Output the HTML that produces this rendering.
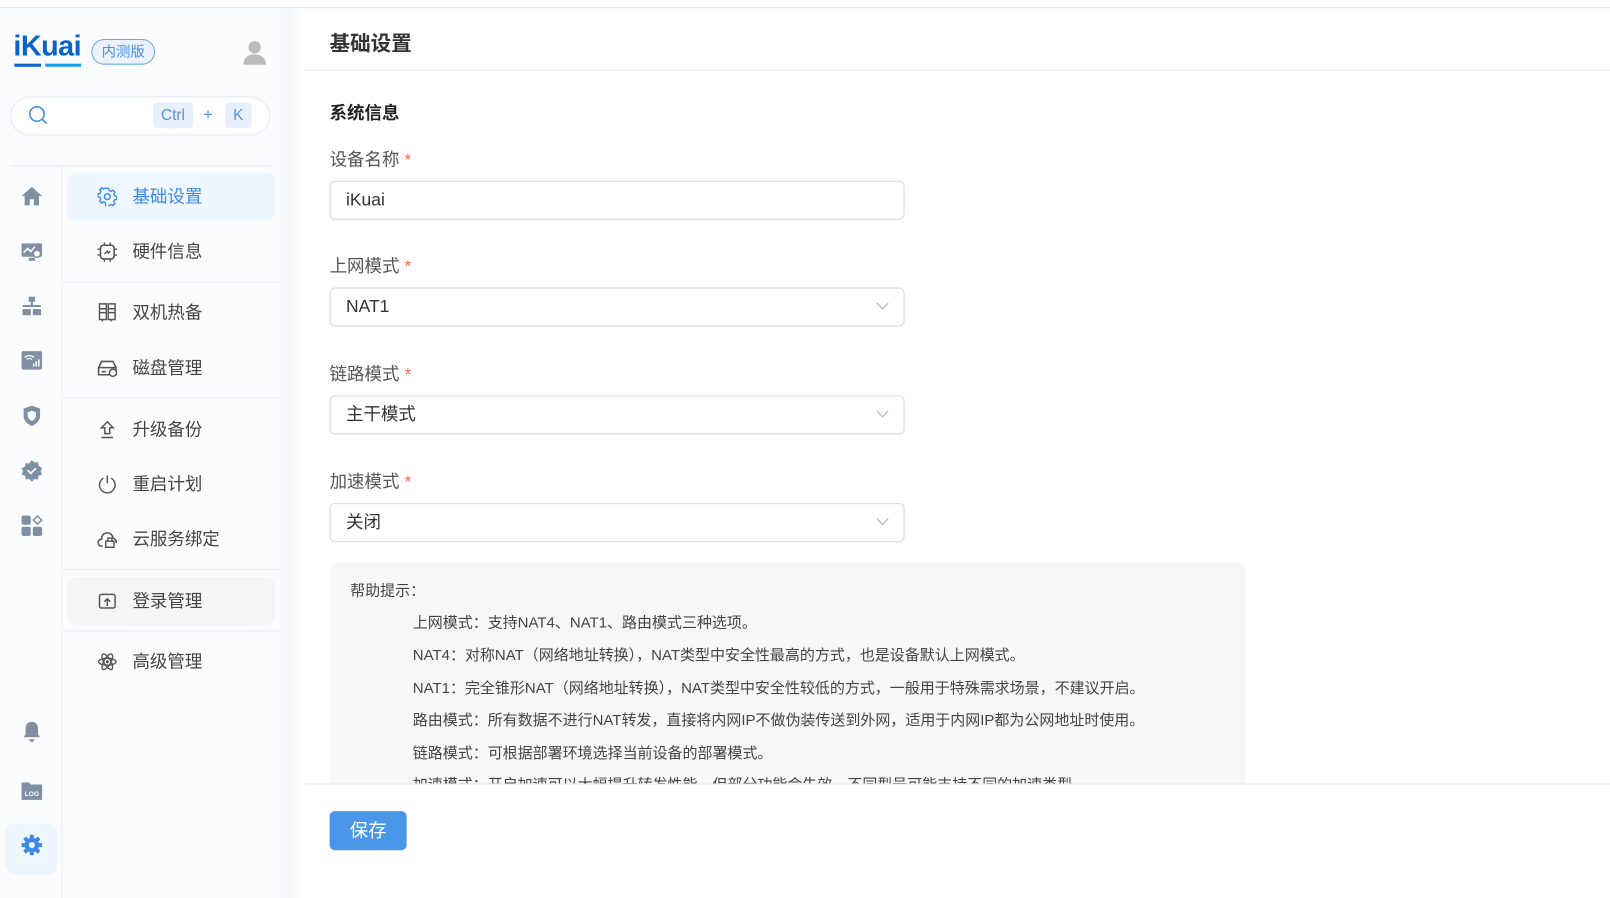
<!DOCTYPE html>
<html><head><meta charset="utf-8">
<style>
*{margin:0;padding:0;box-sizing:border-box}
html,body{width:1610px;height:875px;overflow:hidden;background:#fff}
#w{position:absolute;left:0;top:0;width:1568px;height:852px;transform:scale(1.0268);transform-origin:0 0;font-family:"Liberation Sans","Noto Sans CJK SC",sans-serif;color:#333}
.topline{position:absolute;left:0;top:7px;width:1568px;height:1px;background:#e4e4e4}
.side{position:absolute;left:0;top:8px;width:273px;height:867px;background:#fbfcfe}
.shadow{position:absolute;left:273px;top:8px;width:24px;height:867px;background:linear-gradient(90deg,#f1f5fa,#fff)}
.rail{position:absolute;left:60px;top:162px;width:1px;height:713px;background:#eceef2}
.hsep{position:absolute;left:10px;top:161px;width:253px;height:1px;background:#e9ecf0}
.logo{position:absolute;left:13px;top:29px;font-weight:bold;font-size:28px;color:#0a63c9;letter-spacing:-0.5px}
.logo-ul{position:absolute;top:62px;height:3px}
.badge{position:absolute;left:89px;top:38px;width:62px;height:25px;border:1px solid #6aa4e8;border-radius:13px;background:#eaf3fd;color:#4a8ee0;font-size:14px;text-align:center;line-height:23px}
.search{position:absolute;left:10px;top:94px;width:253px;height:38px;border:1px solid #e3ecf7;border-radius:19px;background:#fff}
.kbd{position:absolute;top:100px;height:25px;background:#e7f0fc;border-radius:4px;color:#5a93dc;font-size:15px;line-height:25px;text-align:center}
.ri{position:absolute;left:20px;width:22px;height:22px}
.mi{position:absolute;left:65px;width:203px;height:47px;border-radius:10px;font-size:17px;color:#444;line-height:47px;padding-left:64px}
.mi svg{position:absolute;left:30px;top:14px}
.msep{position:absolute;left:61px;width:212px;height:1px;background:#eceef2}
.h1{position:absolute;left:321px;top:26px;font-size:20px;font-weight:bold;color:#333}
.hline{position:absolute;left:297px;top:68px;width:1271px;height:1px;background:#ececec}
.h2{position:absolute;left:321px;top:96px;font-size:17px;font-weight:bold;color:#222}
.lbl{position:absolute;left:321px;font-size:17px;color:#555}
.lbl b{color:#f56c6c;font-weight:normal;margin-left:5px}
.inp{position:absolute;left:321px;width:560px;height:38px;border:1px solid #d6d9de;border-radius:5px;font-size:17px;color:#333;line-height:36px;padding-left:15px}
.inp svg{position:absolute;right:14px;top:13px}
.help{position:absolute;left:321px;top:548px;width:892px;height:215px;background:#f6f7f9;border-radius:8px 8px 0 0;overflow:hidden;font-size:14.6px;color:#444}
.help p{position:absolute;white-space:nowrap}
.fline{position:absolute;left:297px;top:763px;width:1271px;height:1px;background:#ececec}
.btn{position:absolute;left:321px;top:790px;width:75px;height:38px;background:#4a96e8;border-radius:5px;color:#fff;font-size:18px;text-align:center;line-height:38px}
</style></head><body><div id="w">
<div class="topline"></div>
<div class="side"></div>
<div class="shadow"></div>
<div class="logo">iKuai</div>
<div class="logo-ul" style="left:14px;width:26px;background:#0a63c9"></div>
<div class="logo-ul" style="left:44px;width:35px;background:#1aa0e8"></div>
<div class="badge">内测版</div>
<svg style="position:absolute;left:236px;top:38px" width="24" height="26" viewBox="0 0 24 26"><circle cx="12" cy="8" r="6" fill="#bbb"/><path d="M1 25c0-7 5-10 11-10s11 3 11 10z" fill="#bbb"/></svg>
<div class="search"></div>
<svg style="position:absolute;left:27px;top:102px" width="20" height="20" viewBox="0 0 20 20"><circle cx="9" cy="9" r="7" fill="none" stroke="#4a90e2" stroke-width="1.6"/><path d="M14 14l4.5 4.5" stroke="#4a90e2" stroke-width="1.6"/></svg>
<div class="kbd" style="left:149px;width:39px">Ctrl</div>
<div style="position:absolute;left:198px;top:104px;color:#5a93dc;font-size:16px">+</div>
<div class="kbd" style="left:219px;width:26px">K</div>
<div class="hsep"></div>
<div class="rail"></div>
<svg class="ri" style="top:180px" viewBox="0 0 22 22"><path d="M11 2L1 11h3v9h5v-6h4v6h5v-9h3z" fill="#7f8fa4"/></svg>
<svg class="ri" style="top:234px" viewBox="0 0 22 22"><rect x="1" y="3" width="20" height="13" rx="1.5" fill="#7f8fa4"/><rect x="8" y="17" width="6" height="3" fill="#7f8fa4"/><path d="M3 12l4-4 3 3 4-5" stroke="#fff" stroke-width="1.5" fill="none"/><circle cx="16" cy="13" r="3.5" fill="#fff" stroke="#7f8fa4" stroke-width="1.5"/></svg>
<svg class="ri" style="top:287px" viewBox="0 0 22 22"><rect x="8" y="2" width="6" height="5" fill="#7f8fa4"/><rect x="2" y="10" width="18" height="2" fill="#7f8fa4"/><rect x="2" y="14" width="8" height="6" fill="#7f8fa4"/><rect x="12" y="14" width="8" height="6" fill="#7f8fa4"/><rect x="10" y="7" width="2" height="4" fill="#7f8fa4"/></svg>
<svg class="ri" style="top:340px" viewBox="0 0 22 22"><rect x="1" y="2" width="20" height="18" rx="2" fill="#7f8fa4"/><path d="M4 8a7 7 0 0 1 9 0M6 10a4 4 0 0 1 5 0" stroke="#fff" stroke-width="1.3" fill="none"/><rect x="12" y="14" width="1.5" height="3" fill="#fff"/><rect x="14.5" y="12" width="1.5" height="5" fill="#fff"/><rect x="17" y="10" width="1.5" height="7" fill="#fff"/></svg>
<svg class="ri" style="top:394px" viewBox="0 0 22 22"><path d="M11 1l8 3v7c0 5-4 8-8 10-4-2-8-5-8-10V4z" fill="#7f8fa4"/><path d="M11 6l4 1.5v3.5c0 2.5-2 4-4 5-2-1-4-2.5-4-5V7.5z" fill="#fbfcfe"/></svg>
<svg class="ri" style="top:447px" viewBox="0 0 22 22"><path d="M11 1l2.5 2.5 3.5-.5.5 3.5L21 9l-1.5 3 1.5 3-3.5 1.5-.5 3.5-3.5-.5L11 22l-2.5-2.5-3.5.5-.5-3.5L1 15l1.5-3L1 9l3.5-1.5.5-3.5 3.5.5z" fill="#7f8fa4"/><path d="M7 11l3 3 5-5" stroke="#fff" stroke-width="1.8" fill="none"/></svg>
<svg class="ri" style="top:501px" viewBox="0 0 22 22"><rect x="1" y="1" width="9" height="9" rx="2" fill="#7f8fa4"/><rect x="1" y="12" width="9" height="9" rx="2" fill="#7f8fa4"/><rect x="12" y="12" width="9" height="9" rx="2" fill="#7f8fa4"/><path d="M16.5 1.5l4 4-4 4-4-4z" fill="none" stroke="#7f8fa4" stroke-width="1.5"/></svg>
<svg class="ri" style="top:702px" viewBox="0 0 22 22"><path d="M11 1c-4 0-6 3-6 6v6l-2 3h16l-2-3V7c0-3-2-6-6-6z" fill="#7f8fa4"/><path d="M8.5 18a2.5 2.5 0 0 0 5 0z" fill="#7f8fa4"/></svg>
<svg class="ri" style="top:759px" viewBox="0 0 22 22"><path d="M1 3h7l2 2h11v15H1z" fill="#7f8fa4"/><text x="11" y="16" font-size="6.5" font-weight="bold" fill="#fff" text-anchor="middle" font-family="Liberation Sans">LOG</text></svg>
<div style="position:absolute;left:5px;top:802px;width:51px;height:50px;border-radius:10px;background:#eef6ff"></div>
<svg class="ri" style="top:812px" viewBox="0 0 22 22"><g fill="#3d8ae6"><circle cx="11" cy="11" r="7"/><rect x="9" y="1" width="4" height="20" rx="1"/><rect x="1" y="9" width="20" height="4" rx="1"/><rect x="9" y="1" width="4" height="20" rx="1" transform="rotate(45 11 11)"/><rect x="9" y="1" width="4" height="20" rx="1" transform="rotate(-45 11 11)"/></g><circle cx="11" cy="11" r="3" fill="#eef6ff"/></svg>
<div class="mi" style="top:168px;background:#eef6ff;color:#3d8ae6"><svg width="19" height="19" viewBox="0 0 20 20"><circle cx="10" cy="10" r="3" fill="none" stroke="#3d8ae6" stroke-width="1.5"/><path d="M8.5 1.5h3l.5 2.3 1.8.9 2-1.2 2 2-1.2 2 .9 1.8 2.3.5v3l-2.3.5-.9 1.8 1.2 2-2 2-2-1.2-1.8.9-.5 2.3h-3L8 16.2l-1.8-.9-2 1.2-2-2 1.2-2L2.5 10.7.2 10.2v-3l2.3-.5.9-1.8-1.2-2 2-2 2 1.2 1.8-.9z" fill="none" stroke="#3d8ae6" stroke-width="1.4"/></svg>基础设置</div>
<div class="mi" style="top:222px"><svg width="19" height="19" viewBox="0 0 20 20"><rect x="3" y="3" width="14" height="14" rx="3" fill="none" stroke="#555" stroke-width="1.6"/><path d="M7 0v3M13 0v3M7 17v3M13 17v3M0 7h3M0 13h3M17 7h3M17 13h3M7 12l3-3 1 2 2-2" stroke="#555" stroke-width="1.4" fill="none"/></svg>硬件信息</div>
<div class="msep" style="top:274px"></div>
<div class="mi" style="top:281px"><svg width="19" height="19" viewBox="0 0 20 20"><path d="M2 1h7v16H2zM11 1h7v16h-7zM2 6h7M2 10h7M11 6h7M11 10h7M5 17v2M14 17v2" stroke="#555" stroke-width="1.5" fill="none"/></svg>双机热备</div>
<div class="mi" style="top:335px"><svg width="20" height="19" viewBox="0 0 20 19"><path d="M4 3h11l3 6v7H1V9z M1 9h17" stroke="#555" stroke-width="1.5" fill="none"/><circle cx="15" cy="14" r="3.5" fill="#fff" stroke="#555" stroke-width="1.4"/><path d="M4 13h4" stroke="#555" stroke-width="1.5"/></svg>磁盘管理</div>
<div class="msep" style="top:387px"></div>
<div class="mi" style="top:395px"><svg width="19" height="19" viewBox="0 0 20 20"><path d="M10 2l6 6h-3.5v6h-5V8H4z M4 18h12" stroke="#555" stroke-width="1.5" fill="none"/></svg>升级备份</div>
<div class="mi" style="top:448px"><svg width="19" height="19" viewBox="0 0 20 20"><path d="M6 4a8 8 0 1 0 8 0M10 1v8" stroke="#555" stroke-width="1.5" fill="none"/></svg>重启计划</div>
<div class="mi" style="top:502px"><svg width="20" height="19" viewBox="0 0 20 19"><path d="M5 16H4a3.5 3.5 0 0 1 0-7 5.5 5.5 0 0 1 11-1 4 4 0 0 1 3 5" stroke="#555" stroke-width="1.5" fill="none"/><rect x="8" y="11" width="8" height="6" fill="none" stroke="#555" stroke-width="1.4"/><path d="M10 11V8h4v3" stroke="#555" stroke-width="1.4" fill="none"/></svg>云服务绑定</div>
<div class="msep" style="top:554px"></div>
<div class="mi" style="top:562px;background:#f4f5f7"><svg width="19" height="19" viewBox="0 0 20 20"><rect x="2" y="3" width="16" height="14" rx="2" fill="none" stroke="#555" stroke-width="1.5"/><path d="M10 15V8M7 10.5l3-3 3 3" stroke="#555" stroke-width="1.5" fill="none"/></svg>登录管理</div>
<div class="msep" style="top:614px"></div>
<div class="mi" style="top:621px"><svg width="19" height="19" viewBox="0 0 20 20"><g fill="none" stroke="#555" stroke-width="1.4"><ellipse cx="10" cy="10" rx="9" ry="3.5"/><ellipse cx="10" cy="10" rx="9" ry="3.5" transform="rotate(60 10 10)"/><ellipse cx="10" cy="10" rx="9" ry="3.5" transform="rotate(-60 10 10)"/></g><circle cx="10" cy="10" r="1.6" fill="#555"/></svg>高级管理</div>
<div class="h1">基础设置</div>
<div class="hline"></div>
<div class="h2">系统信息</div>
<div class="lbl" style="top:141px">设备名称<b>*</b></div>
<div class="inp" style="top:176px">iKuai</div>
<div class="lbl" style="top:245px">上网模式<b>*</b></div>
<div class="inp" style="top:280px">NAT1<svg width="13" height="8" viewBox="0 0 13 8"><path d="M1 1l5.5 6L12 1" stroke="#bbb" stroke-width="1.2" fill="none"/></svg></div>
<div class="lbl" style="top:350px">链路模式<b>*</b></div>
<div class="inp" style="top:385px">主干模式<svg width="13" height="8" viewBox="0 0 13 8"><path d="M1 1l5.5 6L12 1" stroke="#bbb" stroke-width="1.2" fill="none"/></svg></div>
<div class="lbl" style="top:455px">加速模式<b>*</b></div>
<div class="inp" style="top:490px">关闭<svg width="13" height="8" viewBox="0 0 13 8"><path d="M1 1l5.5 6L12 1" stroke="#bbb" stroke-width="1.2" fill="none"/></svg></div>
<div class="help">
<p style="left:20px;top:16px">帮助提示：</p>
<p style="left:81px;top:47px">上网模式：支持NAT4、NAT1、路由模式三种选项。</p>
<p style="left:81px;top:79px">NAT4：对称NAT（网络地址转换），NAT类型中安全性最高的方式，也是设备默认上网模式。</p>
<p style="left:81px;top:111px">NAT1：完全锥形NAT（网络地址转换），NAT类型中安全性较低的方式，一般用于特殊需求场景，不建议开启。</p>
<p style="left:81px;top:142px">路由模式：所有数据不进行NAT转发，直接将内网IP不做伪装传送到外网，适用于内网IP都为公网地址时使用。</p>
<p style="left:81px;top:174px">链路模式：可根据部署环境选择当前设备的部署模式。</p>
<p style="left:81px;top:205px">加速模式：开启加速可以大幅提升转发性能，但部分功能会失效，不同型号可能支持不同的加速类型。</p>
</div>
<div class="fline"></div>
<div class="btn">保存</div>
</div></body></html>
